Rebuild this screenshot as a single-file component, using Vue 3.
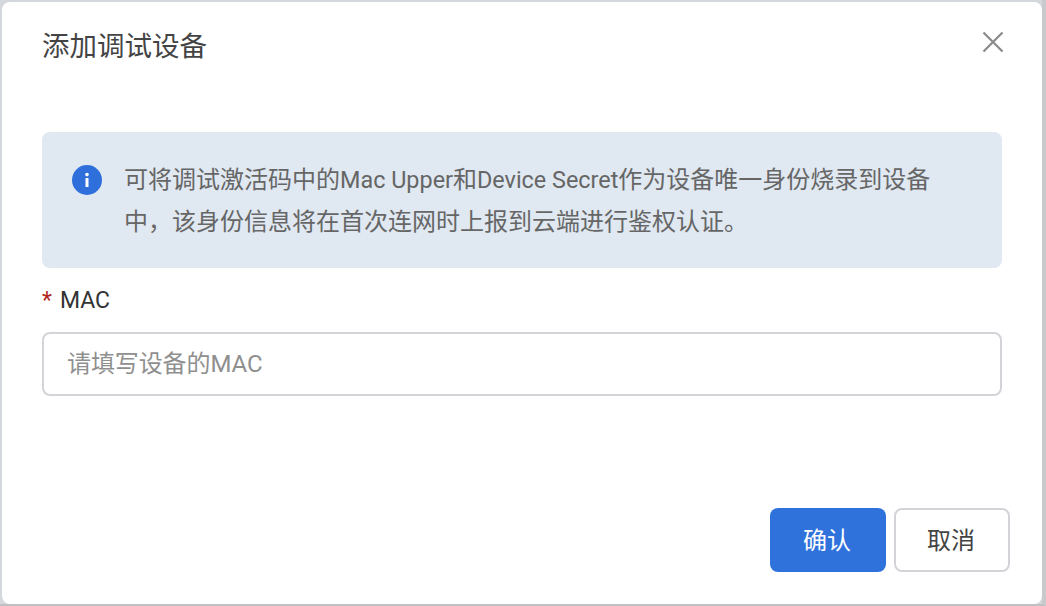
<script setup>
import { ref } from 'vue'

const mac = ref('')
</script>

<template>
  <div class="page">
    <div class="dialog">
      <header class="dialog-header">
        <h2 class="dialog-title">添加调试设备</h2>
        <button class="close-btn" type="button" aria-label="关闭">
          <svg width="24" height="24" viewBox="0 0 24 24">
            <path d="M2.5 2.5 L21.5 21.5 M21.5 2.5 L2.5 21.5" stroke="#8a8a8a" stroke-width="2.2" fill="none" />
          </svg>
        </button>
      </header>

      <div class="dialog-body">
        <div class="alert">
          <svg class="alert-icon" width="30" height="30" viewBox="0 0 30 30">
            <circle cx="15" cy="15" r="15" fill="#2f6fdb" />
            <circle cx="15" cy="9.6" r="1.8" fill="#fff" />
            <rect x="13.5" y="13" width="3" height="9" rx="0.5" fill="#fff" />
          </svg>
          <p class="alert-text">可将调试激活码中的<span class="latin">Mac Upper</span>和<span class="latin">Device Secret</span>作为设备唯一身份烧录到设备中，该身份信息将在首次连网时上报到云端进行鉴权认证。</p>
        </div>

        <label class="field-label"><span class="required">*</span>MAC</label>
        <input v-model="mac" class="field-input" type="text" placeholder="请填写设备的MAC" />
      </div>

      <footer class="dialog-footer">
        <button class="btn btn-primary" type="button">确认</button>
        <button class="btn btn-default" type="button">取消</button>
      </footer>
    </div>
  </div>
</template>

<style>
html,
body {
  margin: 0;
  background: #d2d4d9;
}
</style>

<style scoped>
.page {
  width: 1046px;
  height: 606px;
  box-sizing: border-box;
  padding: 2px 0 0 2px;
  border-right: 4px solid #c8c9cb;
  border-bottom: 2px solid #c0c1c3;
  background: #d4d7dc;
  font-family: Roboto, "Noto Sans CJK SC", sans-serif;
  overflow: hidden;
}

.dialog {
  height: 602px;
  box-sizing: border-box;
  display: flex;
  flex-direction: column;
  background: #fff;
  border-radius: 8px;
  padding: 0 32px 32px 40px;
}

.dialog-header {
  height: 88px;
  display: flex;
  align-items: center;
  justify-content: space-between;
  flex-shrink: 0;
}

.dialog-title {
  margin: 0;
  padding-top: 2px;
  font-size: 27.5px;
  font-weight: 400;
  line-height: 36px;
  color: #444;
}

.close-btn {
  width: 24px;
  height: 24px;
  padding: 0;
  margin: 0 5px 8px 0;
  border: none;
  background: none;
}

.dialog-body {
  flex: 1;
  padding: 42px 8px 0 0;
}

.alert {
  height: 136px;
  box-sizing: border-box;
  display: flex;
  align-items: flex-start;
  padding: 27px 64px 0 30px;
  background: #e0e8f1;
  border-radius: 8px;
}

.alert-icon {
  flex-shrink: 0;
  margin: 6px 22px 0 0;
}

.alert-text {
  margin: 0;
  font-size: 24px;
  line-height: 42px;
  color: #666;
}

.latin {
  font-size: 23.4px;
}

.field-label {
  display: block;
  height: 64px;
  line-height: 66px;
  font-size: 23px;
  color: #333;
}

.required {
  margin-right: 8px;
  color: #b3261e;
}

.field-input {
  display: block;
  width: 100%;
  height: 64px;
  box-sizing: border-box;
  padding: 0 23px;
  border: 2px solid #d2d4d8;
  border-radius: 8px;
  font: inherit;
  font-size: 24px;
  letter-spacing: -0.1px;
  color: #333;
  outline: none;
}

.field-input::placeholder {
  color: #8f8f8f;
  opacity: 1;
}

.dialog-footer {
  display: flex;
  justify-content: flex-end;
  gap: 8px;
}

.btn {
  width: 116px;
  height: 64px;
  box-sizing: border-box;
  padding: 0 2px 4px 0;
  border-radius: 8px;
  font: inherit;
  font-size: 24px;
}

.btn-primary {
  border: none;
  background: #2f72dc;
  color: #fff;
}

.btn-default {
  border: 2px solid #d2d4d8;
  background: #fff;
  color: #444;
}
</style>
